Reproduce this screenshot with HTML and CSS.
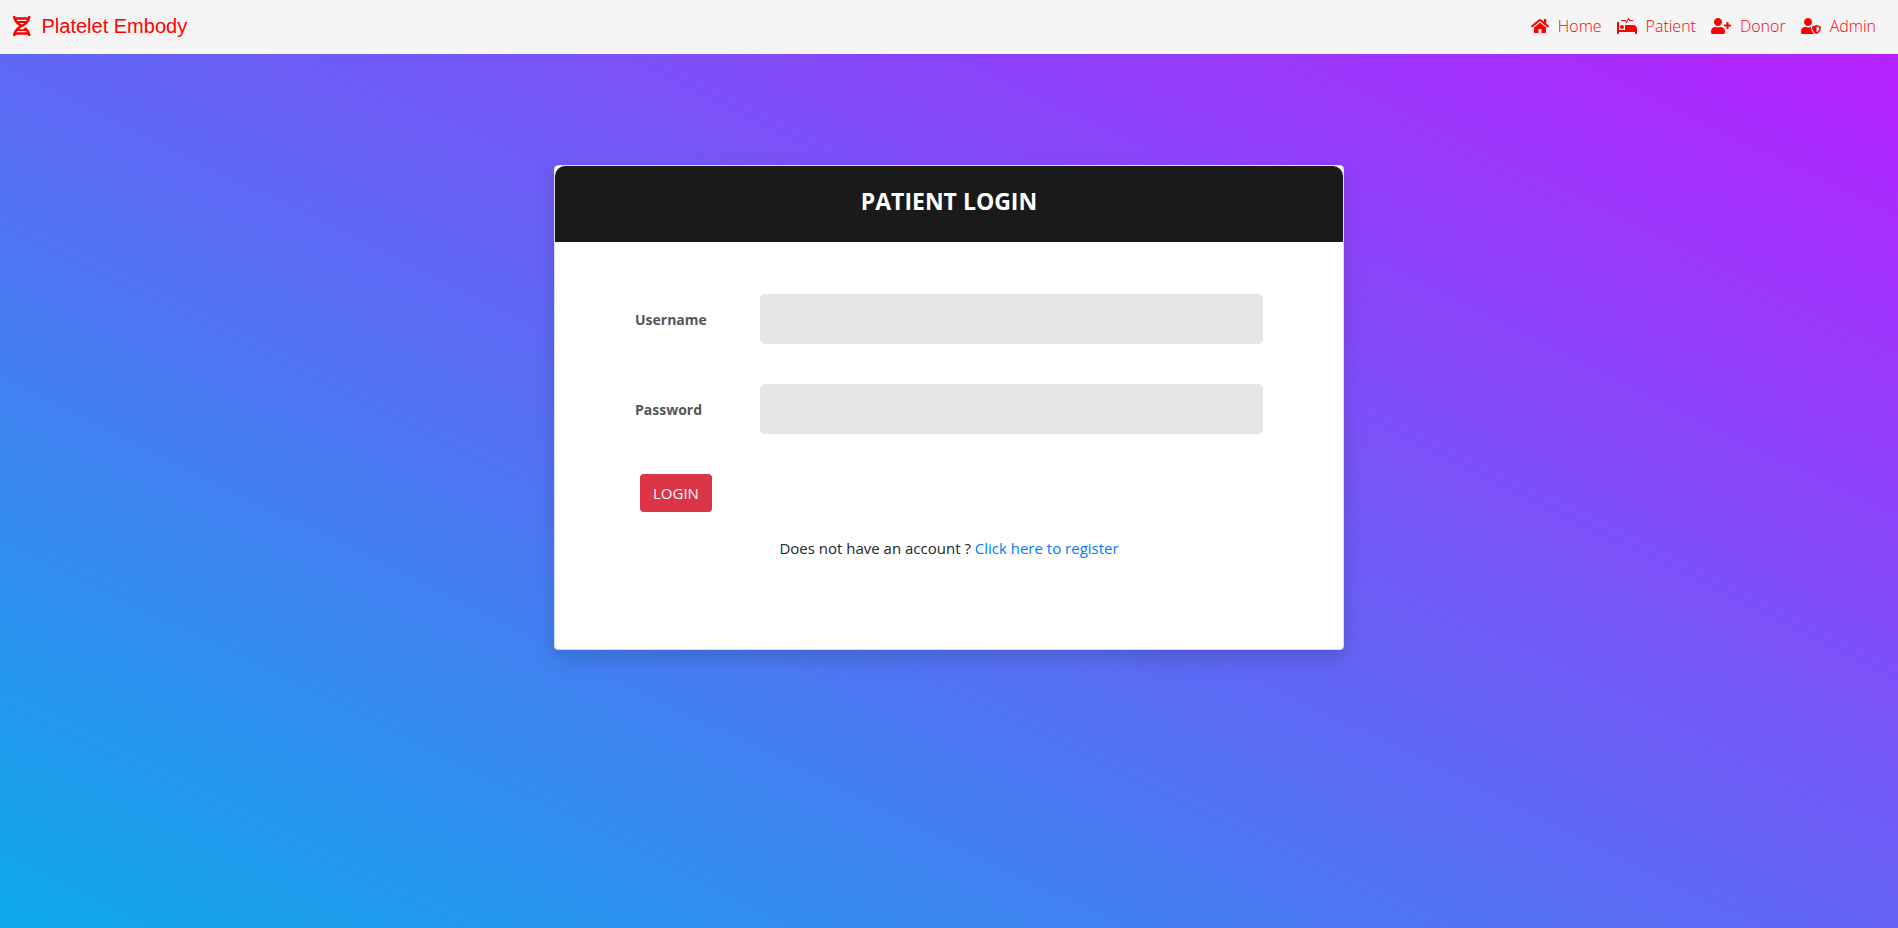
FILE: index.html
```html
<!DOCTYPE html>
<html lang="en">
<head>
<meta charset="utf-8">
<meta name="viewport" content="width=device-width, initial-scale=1">
<title>Platelet Embody</title>
<link rel="stylesheet" href="styles.css">
</head>
<body>
<header class="navbar">
  <a class="brand" href="#">
    <svg class="brand-icon" viewBox="0 0 448 512" aria-hidden="true"><path d="M.1 494.1c-1.1 9.5 6.3 17.8 15.9 17.8l32.3.1c8.1 0 14.9-5.9 16-13.9.7-4.9 1.8-11.1 3.4-18.1H380c1.6 6.9 2.9 13.2 3.5 18.1 1.1 8 7.9 14 16 13.9l32.3-.1c9.6 0 17.1-8.3 15.9-17.8-4.6-37.9-25.6-129-118.9-207.7-17.6 12.4-37.1 24.2-58.5 35.4 6.2 4.6 11.4 9.4 17 14.2H159.7c21.3-18.1 47-35.6 78.7-51.4C410.5 199.1 442.1 65.8 447.9 17.9 449 8.4 441.6.1 432 .1L399.6 0c-8.1 0-14.9 5.9-16 13.9-.7 4.9-1.8 11.1-3.4 18.1H67.8c-1.6-7-2.7-13.1-3.4-18.1-1.1-8-7.9-14-16-13.9L16.1.1C6.5.1-1 8.4.1 17.9 5.3 60.8 31.4 171.8 160 256 31.5 340.2 5.3 451.2.1 494.1zM224 219.6c-25.1-13.7-46.4-28.4-64.3-43.6h128.5c-17.8 15.2-39.1 30-64.2 43.6zM355.1 96c-5.8 10.4-12.8 21.1-21 32H114c-8.3-10.9-15.3-21.6-21-32h262.1zM92.9 416c5.8-10.4 12.8-21.1 21-32h219.4c8.3 10.9 15.4 21.6 21.2 32H92.9z"/></svg>
    <span>Platelet Embody</span>
  </a>
  <nav class="nav">
    <a class="nav-link" href="#"><svg class="nav-icon" viewBox="0 0 576 512" aria-hidden="true"><path d="M280.37 148.26L96 300.11V464a16 16 0 0 0 16 16l112.06-.29a16 16 0 0 0 15.92-16V368a16 16 0 0 1 16-16h64a16 16 0 0 1 16 16v95.64a16 16 0 0 0 16 16.05L464 480a16 16 0 0 0 16-16V300L295.67 148.26a12.19 12.19 0 0 0-15.3 0zM571.6 251.47L488 182.56V44.05a12 12 0 0 0-12-12h-56a12 12 0 0 0-12 12v72.61L318.47 43a48 48 0 0 0-61 0L4.34 251.47a12 12 0 0 0-1.6 16.9l25.5 31A12 12 0 0 0 45.15 301l235.22-193.74a12.19 12.19 0 0 1 15.3 0L530.9 301a12 12 0 0 0 16.9-1.6l25.5-31a12 12 0 0 0-1.7-16.93z"/></svg>Home</a>
    <a class="nav-link" href="#"><svg class="nav-icon" viewBox="0 0 640 512" aria-hidden="true"><path d="M528 224H272c-8.8 0-16 7.2-16 16v144H64V144c0-8.8-7.2-16-16-16H16c-8.8 0-16 7.2-16 16v352c0 8.8 7.2 16 16 16h32c8.8 0 16-7.2 16-16v-48h512v48c0 8.8 7.2 16 16 16h32c8.8 0 16-7.2 16-16V336c0-61.9-50.1-112-112-112zM136 96h126.1l27.6 55.2c5.9 11.8 22.7 11.8 28.6 0L368 51.8 390.1 96H512c8.8 0 16-7.2 16-16s-7.2-16-16-16H409.9L382.3 8.8C376.4-3 359.6-3 353.7 8.8L304 108.2l-19.9-39.8c-1.4-2.7-4.1-4.4-7.2-4.4H136c-4.4 0-8 3.6-8 8v16c0 4.4 3.6 8 8 8zm24 256c35.3 0 64-28.7 64-64s-28.7-64-64-64-64 28.7-64 64 28.7 64 64 64z"/></svg>Patient</a>
    <a class="nav-link" href="#"><svg class="nav-icon" viewBox="0 0 640 512" aria-hidden="true"><path d="M624 208h-64v-64c0-8.8-7.2-16-16-16h-32c-8.8 0-16 7.2-16 16v64h-64c-8.8 0-16 7.2-16 16v32c0 8.8 7.2 16 16 16h64v64c0 8.8 7.2 16 16 16h32c8.8 0 16-7.2 16-16v-64h64c8.8 0 16-7.2 16-16v-32c0-8.8-7.2-16-16-16zm-400 48c70.7 0 128-57.3 128-128S294.7 0 224 0 96 57.3 96 128s57.3 128 128 128zm89.6 32h-16.7c-22.2 10.2-46.9 16-72.9 16s-50.6-5.8-72.9-16h-16.7C60.2 288 0 348.2 0 422.4V464c0 26.5 21.5 48 48 48h352c26.5 0 48-21.5 48-48v-41.6c0-74.2-60.2-134.4-134.4-134.4z"/></svg>Donor</a>
    <a class="nav-link" href="#"><svg class="nav-icon" viewBox="0 0 640 512" aria-hidden="true"><path d="M622.3 271.1l-115.2-45c-4.1-1.6-12.6-3.7-22.2 0l-115.2 45c-10.7 4.2-17.7 14-17.7 24.9 0 111.6 68.7 188.8 132.9 213.9 9.6 3.7 18 1.6 22.2 0C558.4 489.9 640 420.5 640 296c0-10.9-7-20.7-17.7-24.9zM496 462.4V273.3l95.5 37.3c-5.6 87.1-60.9 135.4-95.5 151.8zM224 256c70.7 0 128-57.3 128-128S294.7 0 224 0 96 57.3 96 128s57.3 128 128 128zm96 40c0-2.5.8-4.8 1.1-7.2-2.5-.1-4.9-.8-7.5-.8h-16.7c-22.2 10.2-46.9 16-72.9 16s-50.6-5.8-72.9-16h-16.7C60.2 288 0 348.2 0 422.4V464c0 26.5 21.5 48 48 48h352c6.8 0 13.3-1.5 19.2-4-54-42.9-99.2-116.7-99.2-212z"/></svg>Admin</a>
  </nav>
</header>
<main class="page">
  <section class="card">
    <div class="card-heading"><h1 class="title">PATIENT LOGIN</h1></div>
    <form class="card-body">
      <div class="form-row">
        <label class="label" for="username">Username</label>
        <input class="input" id="username" name="username" type="text">
      </div>
      <div class="form-row">
        <label class="label" for="password">Password</label>
        <input class="input" id="password" name="password" type="password">
      </div>
      <button class="btn" type="submit">LOGIN</button>
      <p class="register">Does not have an account ? <a class="register-link" href="#">Click here to register</a></p>
    </form>
  </section>
</main>
</body>
</html>
```
FILE: styles.css
```css
* {
  box-sizing: border-box;
}

body {
  margin: 0;
  min-height: 100vh;
  display: flex;
  flex-direction: column;
  font-family: "Open Sans", "Noto Sans", sans-serif;
  font-size: 15px;
  line-height: 24px;
  color: #212529;
}

.navbar {
  display: flex;
  flex-wrap: wrap;
  justify-content: space-between;
  align-items: center;
  min-height: 54px;
  padding: 0 22px 2px 13px;
  background: #f5f5f5;
}

.brand {
  display: flex;
  align-items: center;
  gap: 11px;
  color: #f00;
  font-family: "Liberation Sans", Arial, sans-serif;
  font-size: 20px;
  text-decoration: none;
}

.brand-icon {
  height: 20px;
  fill: currentColor;
}

.nav {
  display: flex;
  flex-wrap: wrap;
  gap: 15px;
}

.nav-link {
  display: flex;
  align-items: center;
  gap: 9px;
  color: #f00;
  font-size: 16px;
  font-weight: 300;
  text-decoration: none;
}

.nav-icon {
  height: 16px;
  fill: currentColor;
}

.page {
  flex: 1;
  padding: 111px 16px 48px;
  background: linear-gradient(to top right, #08aeea 0%, #b721ff 100%) top left / 100% 100vh;
}

.card {
  max-width: 790px;
  margin: 0 auto;
  background: #fff;
  border: 1px solid #dcdce6;
  border-radius: 4px;
  box-shadow: 0 8px 20px rgba(0, 0, 0, 0.15);
}

.card-heading {
  padding: 19px 40px 24px;
  background: #1a1a1a;
  border-bottom: 1px solid #171717;
  border-radius: 10px 10px 0 0;
}

.title {
  margin: 0;
  color: #fff;
  font-size: 23px;
  font-weight: 700;
  line-height: 32px;
  text-align: center;
}

.card-body {
  padding: 52px 80px 89px;
}

.form-row {
  display: grid;
  grid-template-columns: 125px 1fr;
  align-items: center;
  margin-bottom: 40px;
}

.label {
  padding-top: 2px;
  color: #555;
  font-size: 14px;
  font-weight: 700;
}

.input {
  width: 100%;
  height: 50px;
  padding: 0 20px;
  background: #e5e5e5;
  border: 0;
  border-radius: 5px;
  font: inherit;
  color: #555;
}

.btn {
  display: block;
  height: 38px;
  margin: 0 0 24px 5px;
  padding: 0 13px;
  background: #dc3545;
  border: 0;
  border-radius: 4px;
  color: #fff;
  font: inherit;
}

.register {
  margin: 0;
  text-align: center;
}

.register-link {
  color: #007bff;
  text-decoration: none;
}
```
